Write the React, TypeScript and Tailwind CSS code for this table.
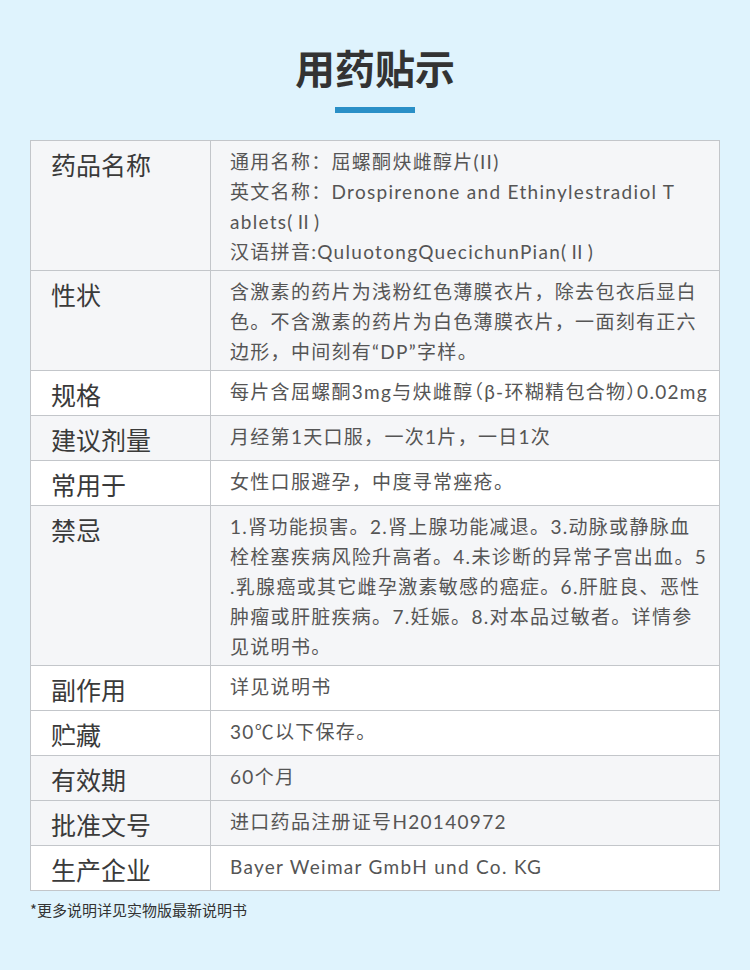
// lines are broken where the reference breaks them
const rows: { label: string; lines: string[]; gray: boolean; halt?: boolean }[] = [
  {
    label: "药品名称",
    lines: [
      "通用名称：屈螺酮炔雌醇片(II)",
      "英文名称：Drospirenone and Ethinylestradiol T",
      "ablets(Ⅱ)",
      "汉语拼音:QuluotongQuecichunPian(Ⅱ)",
    ],
    gray: true,
  },
  {
    label: "性状",
    lines: [
      "含激素的药片为浅粉红色薄膜衣片，除去包衣后显白",
      "色。不含激素的药片为白色薄膜衣片，一面刻有正六",
      "边形，中间刻有“DP”字样。",
    ],
    gray: true,
  },
  { label: "规格", lines: ["每片含屈螺酮3mg与炔雌醇（β-环糊精包合物）0.02mg"], gray: false, halt: true },
  { label: "建议剂量", lines: ["月经第1天口服，一次1片，一日1次"], gray: true },
  { label: "常用于", lines: ["女性口服避孕，中度寻常痤疮。"], gray: false },
  {
    label: "禁忌",
    lines: [
      "1.肾功能损害。2.肾上腺功能减退。3.动脉或静脉血",
      "栓栓塞疾病风险升高者。4.未诊断的异常子宫出血。5",
      ".乳腺癌或其它雌孕激素敏感的癌症。6.肝脏良、恶性",
      "肿瘤或肝脏疾病。7.妊娠。8.对本品过敏者。详情参",
      "见说明书。",
    ],
    gray: true,
  },
  { label: "副作用", lines: ["详见说明书"], gray: false },
  { label: "贮藏", lines: ["30℃以下保存。"], gray: false },
  { label: "有效期", lines: ["60个月"], gray: true },
  { label: "批准文号", lines: ["进口药品注册证号H20140972"], gray: true },
  { label: "生产企业", lines: ["Bayer Weimar GmbH und Co. KG"], gray: false },
];

const cjk = { fontFamily: '"Noto Sans CJK SC", "Noto Sans", sans-serif' };
const body = { fontFamily: 'Lato, "Noto Sans CJK SC", sans-serif' };

export default function App() {
  return (
    <div style={cjk} className="min-h-[970px] w-[750px] bg-[#dff3fd] pt-[42px]">
      <h1 className="text-center text-[40px] font-bold leading-[50px] text-[#333]">用药贴示</h1>
      <div className="mx-auto mt-[15px] h-[6px] w-[80px] bg-[#2a8fc7]" />

      <div className="mx-[30px] mt-[27px] border border-[#c3c6ca]">
        {rows.map((row, i) => (
          <div
            key={row.label}
            className={`grid grid-cols-[180px_1fr] ${i > 0 ? "border-t border-[#c3c6ca]" : ""} ${
              row.gray ? "bg-[#f5f6f8]" : "bg-white"
            }`}
          >
            <div className="border-r border-[#c3c6ca] pl-[20px] pt-[6px] pb-[3px] text-[25px] leading-[35px] text-[#3a3a3a]">
              {row.label}
            </div>
            <div
              style={row.halt ? { ...body, fontFeatureSettings: '"halt"' } : body}
              className="pl-[19px] pr-[10px] pt-[6px] pb-[3px] text-[19px] leading-[30px] tracking-[1.3px] text-[#555] whitespace-nowrap"
            >
              {row.lines.map((line) => (
                <div key={line}>{line}</div>
              ))}
            </div>
          </div>
        ))}
      </div>

      <p className="mx-[30px] mt-[8px] text-[15px] leading-[22px] text-[#333]">*更多说明详见实物版最新说明书</p>
    </div>
  );
}
